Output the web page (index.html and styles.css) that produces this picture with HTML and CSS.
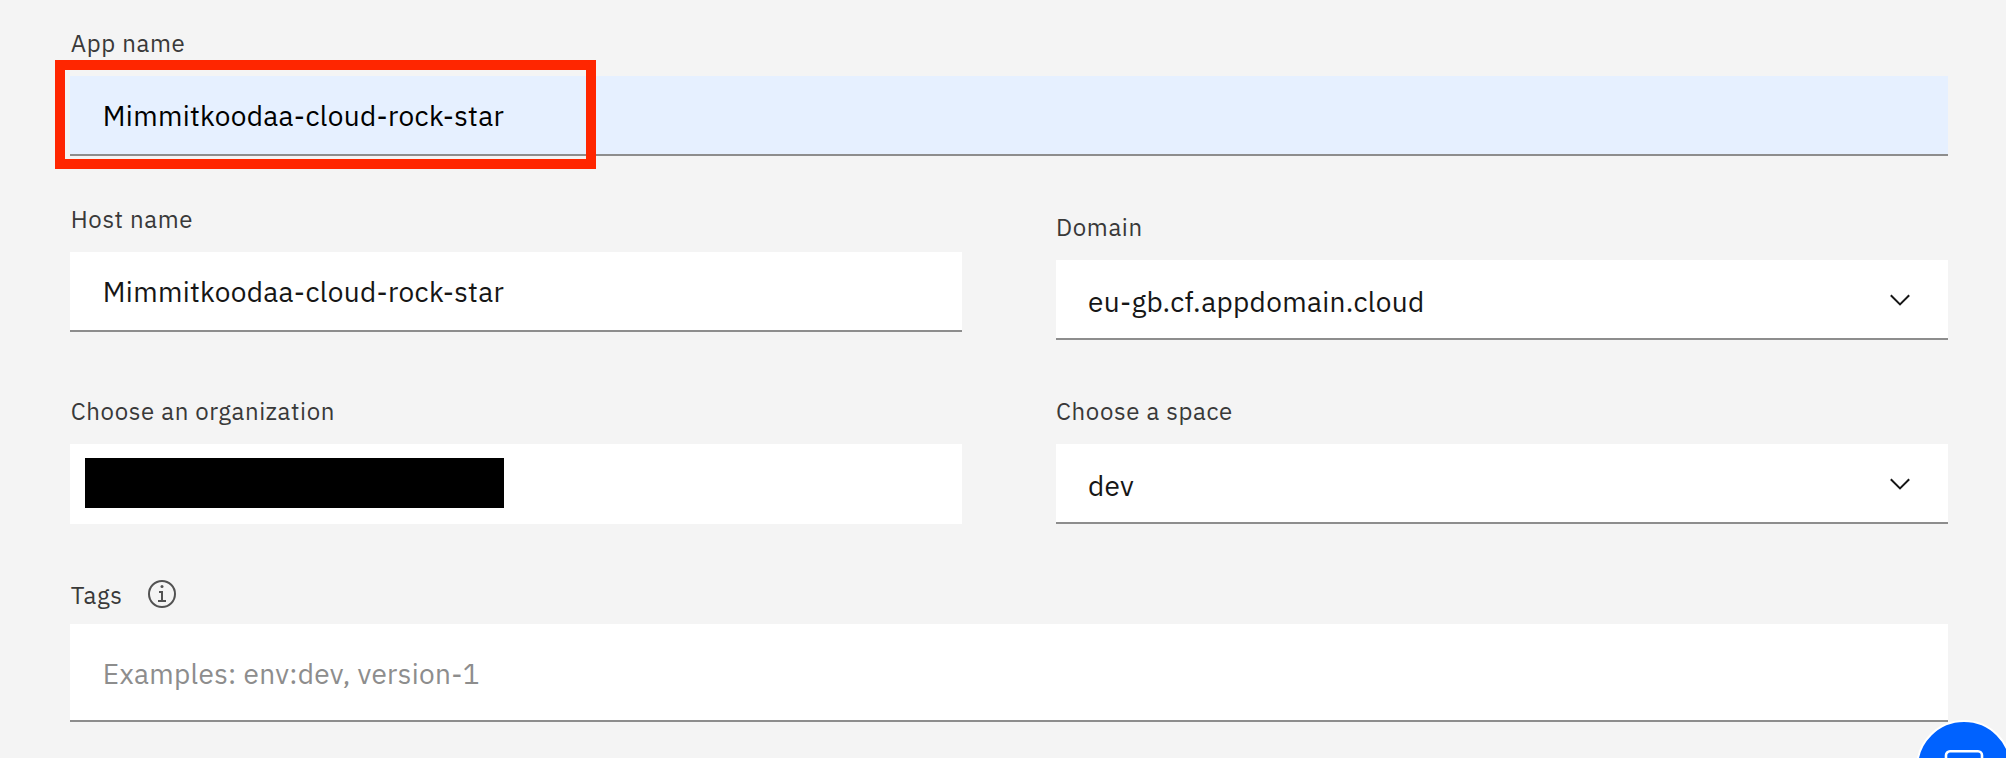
FILE: index.html
```html
<!DOCTYPE html>
<html lang="en">
<head>
<meta charset="utf-8">
<title>Create app</title>
<link rel="stylesheet" href="styles.css">
</head>
<body>
<div class="page">
<main class="form">
  <section class="field start">
    <div class="label">App name</div>
    <div class="control autofill">Mimmitkoodaa-cloud-rock-star</div>
    <div class="highlight"></div>
  </section>
  <div class="row row-host">
    <section class="field start">
      <div class="label">Host name</div>
      <div class="control">Mimmitkoodaa-cloud-rock-star</div>
    </section>
    <section class="field lowered">
      <div class="label">Domain</div>
      <div class="control select"><span>eu-gb.cf.appdomain.cloud</span>
        <svg class="chevron" viewBox="0 0 20 12"><path d="M.8 1.2 10 10.400 19.200 1.200"/></svg></div>
    </section>
  </div>
  <div class="row row-org">
    <section class="field start">
      <div class="label">Choose an organization</div>
      <div class="control plain"><div class="redacted"></div></div>
    </section>
    <section class="field">
      <div class="label">Choose a space</div>
      <div class="control select"><span>dev</span>
        <svg class="chevron" viewBox="0 0 20 12"><path d="M.8 1.2 10 10.400 19.200 1.200"/></svg></div>
    </section>
  </div>
  <section class="field start tags">
    <div class="label">Tags
      <svg class="info" viewBox="0 0 28 28"><circle class="ring" cx="14" cy="14" r="13"/><circle cx="14" cy="6.5" r="1.5"/><path d="M11 11h4v9h3v2h-8v-2h3v-7h-2z"/></svg></div>
    <div class="control tall">Examples: env:dev, version-1</div>
  </section>
</main>
<div class="chat">
  <svg class="chat-icon" viewBox="0 0 40 36"><path d="M15 30H6a4 4 0 0 1-4-4V5.300a4 4 0 0 1 4-4h28a4 4 0 0 1 4 4V26a4 4 0 0 1-4 4h-9l-5 5z"/></svg>
</div>
</div>
</body>
</html>
```
FILE: styles.css
```css
* { box-sizing: border-box; }
body {
  margin: 0;
  font-family: "IBM Plex Sans", Roboto, "Liberation Sans", sans-serif;
  color: #161616;
}
.page {
  position: relative;
  height: 758px;
  overflow: hidden;
  background: #f4f4f4;
}
.form { padding: 28px 58px 0 70px; }
.field { position: relative; }
.label {
  display: flex;
  height: 32px;
  margin-bottom: 16px;
  font-size: 24px;
  line-height: 30px;
  letter-spacing: 0.64px;
  color: #393939;
  white-space: nowrap;
}
.control {
  display: flex;
  height: 80px;
  padding: 2px 32px 0;
  border-bottom: 2px solid #8d8d8d;
  background: #fff;
  font-size: 28px;
  line-height: 75px;
  letter-spacing: 0.32px;
  white-space: nowrap;
}
.start .label { padding-left: 0.75px; }
.start .control { padding-left: 32.75px; }
.autofill { background: #e6f0ff; color: #000; }
.highlight {
  position: absolute;
  left: -15px;
  top: 32px;
  width: 541px;
  height: 109px;
  border: 10px solid #ff2600;
}
.row { display: grid; grid-template-columns: 892px 892px; gap: 94px; }
.row-host { margin-top: 48px; }
.row-org { margin-top: 56px; }
.lowered { padding-top: 8px; }
.select { justify-content: space-between; padding: 4px 38px 0 32px; }
.chevron { width: 20px; height: 12px; margin-top: 30px; }
.chevron path { fill: none; stroke: #161616; stroke-width: 2; }
.start .plain { border-bottom: 0; padding: 14px 15px; }
.redacted { width: 419px; height: 50px; background: #000; }
.tags { margin-top: 56px; }
.tags .label { margin-bottom: 12px; }
.info { position: absolute; left: 78px; top: 0; width: 28px; height: 28px; fill: #525252; }
.info .ring { fill: none; stroke: #525252; stroke-width: 2; }
.tall { height: 98px; padding-top: 4px; line-height: 91px; color: #8d8d8d; }
.chat {
  position: absolute;
  left: 1916px;
  top: 720px;
  width: 96px;
  height: 96px;
  border: 2px solid #fff;
  border-radius: 50%;
  background: #0062ff;
}
.chat-icon { position: absolute; left: 26px; top: 28px; width: 40px; height: 36px; fill: none; stroke: #fff; stroke-width: 2.6px; }
```
